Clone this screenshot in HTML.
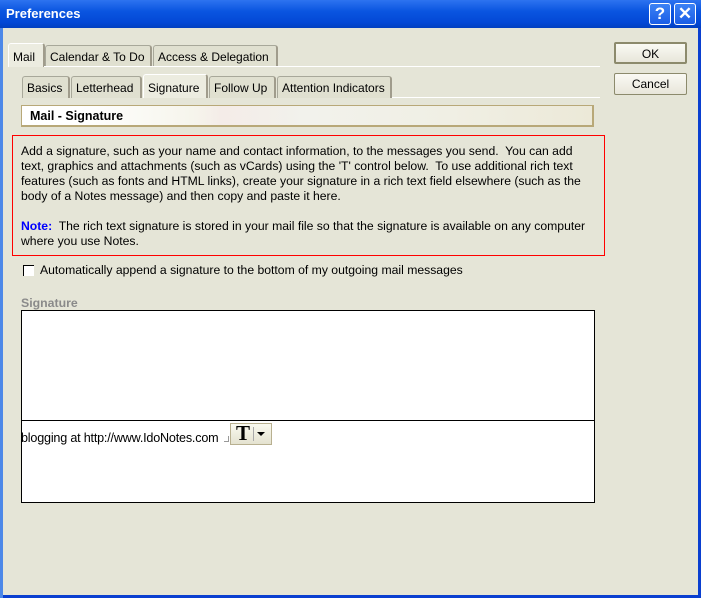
<!DOCTYPE html>
<html><head><style>
*{margin:0;padding:0;box-sizing:border-box}
body{width:701px;height:598px;overflow:hidden;font-family:"Liberation Sans",Tahoma,sans-serif;font-size:11px;color:#000;position:relative;background:#0a3fd0}
.win{position:absolute;left:3px;top:28px;width:695px;height:567px;background:#e5e5d7}
.title{position:absolute;left:0;top:0;width:701px;height:28px;background:linear-gradient(#2d73f0,#0a55e0 40%,#0348d6 80%,#0240c0);color:#fff;font-weight:bold;font-size:13px;padding:6px 0 0 6px}
.tb{position:absolute;top:3px;width:22px;height:22px;border:1px solid #fff;border-radius:3px;background:linear-gradient(#3c82f5,#1a5de6);color:#fff;font-weight:bold;font-size:17px;text-align:center;line-height:20px}
.a{position:absolute;white-space:nowrap}
.tab{position:absolute;height:22px;border:1px solid #a8a89a;border-bottom:none;border-right:2px solid #a09c8c;background:#e0e0d0;padding:4px 4px 0 4px;font-size:12px;border-radius:3px 3px 0 0}
.sel{background:#ecece0;border-color:#fff #a09c8c #fff #fff}
.btn{position:absolute;left:614px;width:73px;height:22px;border:1px solid #8c8a6c;border-radius:2px;background:linear-gradient(#fafaf4,#e8e6da);text-align:center;font-size:12px;line-height:20px}
</style></head><body>
<div class="title">Preferences</div>
<div class="tb" style="left:649px">?</div>
<div class="tb" style="left:674px">✕</div>
<div class="win"></div>
<div style="position:absolute;left:0;top:28px;width:3px;height:570px;background:#4d88e8"></div>

<div class="tab" style="left:45px;top:45px;width:107px">Calendar &amp; To Do</div>
<div class="tab" style="left:153px;top:45px;width:125px">Access &amp; Delegation</div>
<div class="tab sel" style="left:8px;top:43px;width:37px;height:24px;padding-top:6px">Mail</div>
<div class="a" style="left:44px;top:66px;width:556px;height:1px;background:#fff"></div>

<div class="tab" style="left:22px;top:76px;width:48px">Basics</div>
<div class="tab" style="left:71px;top:76px;width:71px">Letterhead</div>
<div class="tab" style="left:209px;top:76px;width:67px">Follow Up</div>
<div class="tab" style="left:277px;top:76px;width:115px">Attention Indicators</div>
<div class="tab sel" style="left:143px;top:74px;width:65px;height:24px;padding-top:6px">Signature</div>
<div class="a" style="left:392px;top:97px;width:208px;height:1px;background:#fff"></div>

<div class="a" style="left:21px;top:105px;width:573px;height:22px;border:1px solid #b8a878;border-width:1px 2px 2px 1px;background:linear-gradient(90deg,#fff 10%,#f6f5ec 30%,#f4ece8 35%,#f2f2ec 50%,#f0efe4 75%,#ece9d8);font-weight:bold;font-size:12.5px;padding:3px 0 0 8px">Mail - Signature</div>

<div class="a" style="left:12px;top:135px;width:593px;height:121px;border:1px solid #f00"></div>
<div class="a" style="left:21px;top:144px;font-size:12.2px;line-height:15px">Add a signature, such as your name and contact information, to the messages you send.&nbsp; You can add<br>text, graphics and attachments (such as vCards) using the 'T' control below.&nbsp; To use additional rich text<br>features (such as fonts and HTML links), create your signature in a rich text field elsewhere (such as the<br>body of a Notes message) and then copy and paste it here.<br><br><b style="color:#00f">Note:</b>&nbsp; The rich text signature is stored in your mail file so that the signature is available on any computer<br>where you use Notes.</div>

<div class="a" style="left:23px;top:265px;width:11px;height:11px;border:1px solid #000;background:#fff;border-width:1px 0 0 1px"></div>
<div class="a" style="left:40px;top:263px;font-size:12.2px">Automatically append a signature to the bottom of my outgoing mail messages</div>
<div class="a" style="left:21px;top:296px;color:#8a8a8a;font-weight:bold;font-size:12.3px">Signature</div>
<div class="a" style="left:21px;top:310px;width:574px;height:193px;border:1px solid #000;background:#fff"></div>
<div class="a" style="left:22px;top:420px;width:573px;height:1px;background:#000"></div>
<div class="a" style="left:21px;top:431px;font-size:12.6px;letter-spacing:-0.2px">blogging at http://www.IdoNotes.com</div>
<div class="a" style="left:224px;top:436px;width:5px;height:6px;border-right:1px solid #999;border-bottom:1px solid #999"></div>
<div class="a" style="left:230px;top:423px;width:42px;height:22px;border:1px solid #b8b090;background:linear-gradient(#fafaf0,#e4e2d0)"></div>
<div class="a" style="left:236px;top:421px;font-family:'Liberation Serif',serif;font-size:21px;font-weight:bold">T</div>
<div class="a" style="left:253px;top:427px;width:1px;height:14px;background:#aaa"></div>
<div class="a" style="left:257px;top:432px;width:0;height:0;border-left:4px solid transparent;border-right:4px solid transparent;border-top:4px solid #000"></div>

<div class="btn" style="top:42px;border:2px solid #8c8a6c">OK</div>
<div class="btn" style="top:73px">Cancel</div>
</body></html>
